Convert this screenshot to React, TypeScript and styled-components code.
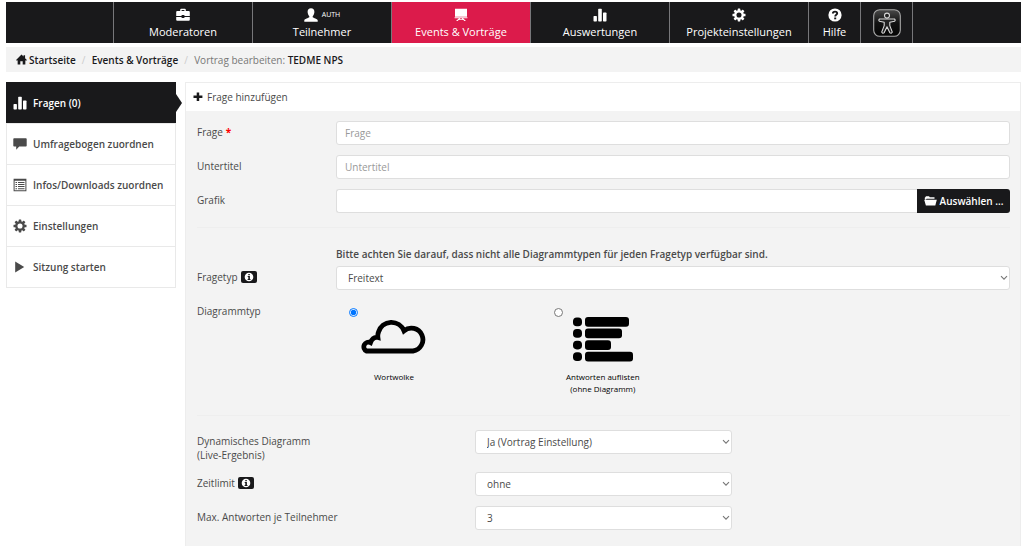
import React from "react";
import styled, { createGlobalStyle, css } from "styled-components";

const dark = "#19191b";
const pink = "#dc1b4b";
const grey = "#f3f3f3";
const line = "#e9e9e9";
const text = "#4a4a4a";

const GlobalStyle = createGlobalStyle`
  *, *::before, *::after { box-sizing: border-box; }
  body {
    margin: 0;
    background: #fff;
    color: ${text};
    font: 10px/14px "Open Sans", "Liberation Sans", sans-serif;
  }
  button, input, select { font: inherit; color: inherit; margin: 0; }
  a { color: inherit; text-decoration: none; }
`;

const Page = styled.div`
  display: flex;
  flex-direction: column;
  min-height: 100vh;
  padding: 2px 3px 0 6px;
`;

const Icon = styled.svg<{ $w?: number; $h?: number }>`
  display: block;
  flex: none;
  width: ${(p) => p.$w ?? 14}px;
  height: ${(p) => p.$h ?? 14}px;
  fill: currentColor;
`;

/* top navigation */
const Nav = styled.nav`
  display: flex;
  height: 41px;
  padding-left: 107px;
  background: ${dark};
`;

const NavLink = styled.a<{ $active?: boolean; $size?: number }>`
  display: flex;
  flex: 0 1 ${(p) => p.$size ?? 139}px;
  flex-direction: column;
  align-items: center;
  justify-content: center;
  gap: 1px;
  border-left: 1px solid #77777a;
  background: ${(p) => (p.$active ? pink : dark)};
  color: #fff;
  font-size: 11px;
  line-height: 18px;
  white-space: nowrap;
  &:last-child { border-right: 1px solid #77777a; }
`;

const NavIcon = styled.span`
  display: flex;
  align-items: center;
  gap: 4px;
  height: 14px;
  margin-top: 4px;
  font-size: 7px;
  line-height: 14px;
`;

/* breadcrumb */
const Breadcrumb = styled.nav`
  display: flex;
  align-items: center;
  height: 25px;
  margin-top: 4px;
  padding-left: 10px;
  background: ${grey};
  color: #777;
`;

const Crumb = styled.a`
  display: flex;
  align-items: center;
  gap: 2px;
  color: ${dark};
  font-weight: 600;
`;

const Slash = styled.span`
  width: 16px;
  color: #ccc;
  text-align: center;
`;

const Strong = styled.strong`
  color: ${dark};
  font-weight: 600;
`;

/* columns */
const Columns = styled.div`
  display: flex;
  flex: 1;
  gap: 9px;
  margin-top: 10px;
`;

const Sidebar = styled.nav`
  flex: 0 0 170px;
  align-self: flex-start;
  border: 1px solid ${line};
  border-top: 0;
`;

const SideLink = styled.a<{ $active?: boolean }>`
  position: relative;
  display: grid;
  grid-template-columns: 14px 1fr;
  align-items: center;
  gap: 6px;
  height: 41px;
  padding-left: 6px;
  color: ${text};
  font-weight: 600;
  & + & { border-top: 1px solid ${line}; }
  ${(p) =>
    p.$active &&
    css`
      margin: 0 -1px;
      padding-left: 7px;
      background: ${dark};
      color: #fff;
      &::after {
        content: "";
        position: absolute;
        left: 100%;
        top: 12px;
        border: 9px solid transparent;
        border-left: 6px solid ${dark};
        border-right: 0;
      }
    `}
`;

const Panel = styled.main`
  flex: 1;
  min-width: 0;
  border: 1px solid #ededed;
  border-bottom: 0;
  background: ${grey};
`;

const PanelTitle = styled.h1`
  display: flex;
  align-items: center;
  gap: 4px;
  height: 28px;
  margin: 0;
  padding-left: 7px;
  background: #fff;
  font-size: 10px;
  font-weight: 400;
`;

const Form = styled.form`
  padding: 10px 10px 16px 11px;
`;

const Row = styled.div<{ $wide?: boolean }>`
  display: grid;
  grid-template-columns: ${(p) => (p.$wide ? "278px minmax(0, 257px)" : "139px minmax(0, 1fr)")};
  align-items: start;
  & + & { margin-top: 10px; }
`;

const labelStyle = css`
  display: flex;
  align-items: center;
  gap: 3px;
  padding-top: 4px;
`;
const Label = styled.label`${labelStyle}`;
const GroupLabel = styled.span`${labelStyle}`;

const Required = styled.span`
  color: #f00;
  font-weight: 700;
`;

const InfoButton = styled.button`
  display: flex;
  align-items: center;
  justify-content: center;
  width: 16px;
  height: 12px;
  padding: 0;
  border: 0;
  border-radius: 2px;
  background: ${dark};
  color: #fff;
`;

const control = css`
  width: 100%;
  height: 24px;
  border: 1px solid #dedede;
  border-radius: 3px;
  background: #fff;
`;

const Input = styled.input`
  ${control}
  padding: 0 8px;
  &::placeholder { color: #999; opacity: 1; }
`;

const FileGroup = styled.div`
  display: flex;
  ${Input} {
    border-right: 0;
    border-radius: 3px 0 0 3px;
  }
`;

const FileButton = styled.button`
  display: flex;
  flex: 0 0 93px;
  align-items: center;
  justify-content: center;
  gap: 3px;
  height: 24px;
  padding: 0;
  border: 0;
  border-radius: 0 3px 3px 0;
  background: ${dark};
  color: #fff;
  font-weight: 600;
  white-space: nowrap;
`;

const SelectBox = styled.div`
  position: relative;
  svg {
    position: absolute;
    right: 2px;
    top: 9px;
    pointer-events: none;
  }
`;

const NativeSelect = styled.select`
  ${control}
  appearance: none;
  padding: 0 12px 0 11px;
`;

const Rule = styled.hr`
  height: 1px;
  margin: 14px 0;
  border: 0;
  background: #eeeeee;
`;

const Note = styled.p`
  margin: 0 0 5px 139px;
  padding-top: 5px;
  font-weight: 600;
`;

const Options = styled.div`
  display: grid;
  grid-template-columns: 205px 205px;
  height: 101px;
`;

const Option = styled.label`
  display: block;
  padding: 8px 0 0 13px;
`;

const Radio = styled.input`
  display: block;
  width: 9px;
  height: 9px;
`;

const Figure = styled.span`
  display: flex;
  flex-direction: column;
  align-items: center;
  width: fit-content;
  margin-left: 12px;
  color: #000;
  font-size: 8px;
  line-height: 12px;
  text-align: center;
  svg { margin-bottom: 9px; }
`;

const BarsIcon = () => (
  <Icon viewBox="0 0 14 14" aria-hidden="true">
    <rect x="0.5" y="8" width="3.4" height="5.5" rx="0.7" />
    <rect x="5.2" y="0.8" width="3.6" height="12.7" rx="0.7" />
    <rect x="10" y="4.5" width="3.5" height="9" rx="0.7" />
  </Icon>
);
const GearIcon = () => (
  <Icon viewBox="0 0 14 14" aria-hidden="true">
    {[0, 45, 90, 135, 180, 225, 270, 315].map((a) => (
      <rect key={a} x="5.7" y="0.5" width="2.6" height="2.6" rx="0.4" transform={`rotate(${a} 7 7)`} />
    ))}
    <circle cx="7" cy="7" r="3.700" fill="none" stroke="currentColor" strokeWidth="2.300" />
  </Icon>
);
const CaseIcon = () => (
  <Icon viewBox="0 0 14 14" aria-hidden="true">
    <path fillRule="evenodd" d="M4.2 3V1.7Q4.2.8 5.2.8h3.6q1 0 1 .9V3h2.9q1.100 0 1.100 1.100V8H8.400V7H5.600v1H.2V4.100Q.2 3 1.300 3ZM5.600 3h2.800v-.9H5.600Z" />
    <path d="M.2 8.900h5.400v1h2.800v-1h5.400v2.900q0 1-1 1H1.200q-1 0-1-1Z" />
  </Icon>
);
const UserIcon = () => (
  <Icon viewBox="0 0 14 14" aria-hidden="true">
    <path d="M7 .3c2.200 0 3.500 1.500 3.400 3.800C10.300 6 9.500 7.500 8.700 8.200v1c.8.8 4.800 1.500 5 3.100v1.400H.3v-1.400c.2-1.600 4.200-2.300 5-3.100v-1C4.500 7.500 3.700 6 3.600 4.100 3.500 1.800 4.800.3 7 .3Z" />
  </Icon>
);
const BoardIcon = () => (
  <Icon viewBox="0 0 14 14" aria-hidden="true">
    <path d="M1 .8h12v8H1ZM.6 9.300h12.800v1H.6ZM2 12.900l3-2.600h1.400l-1 1h3.200l-1-1H9l3 2.600h-1.700l-.9-.8H4.600l-.9.800Z" />
  </Icon>
);
const HelpIcon = () => (
  <Icon viewBox="0 0 14 14" aria-hidden="true">
    <circle cx="7" cy="7" r="6.600" />
    <path d="M4.900 5.400C4.900 3 9.200 3 9.200 5.300c0 1.600-2 1.400-2 3.200" fill="none" stroke={dark} strokeWidth="1.900" />
    <rect x="6.200" y="9.500" width="2" height="1.800" fill={dark} />
  </Icon>
);
const AccessIcon = () => (
  <Icon viewBox="0 0 28 28" $w={28} $h={28} aria-hidden="true">
    <defs>
      <linearGradient id="tile" x1="0" y1="0" x2="0" y2="1">
        <stop offset="0" stopColor="#4a4a4a" />
        <stop offset="0.5" stopColor="#111" />
        <stop offset="1" stopColor="#050505" />
      </linearGradient>
    </defs>
    <rect x="0.7" y="0.7" width="26.600" height="26.600" rx="6" fill="url(#tile)" stroke="#aaa" strokeWidth="1.100" />
    <g fill="#222" stroke="#d8d8d8" strokeWidth="1.100" strokeLinejoin="round">
      <circle cx="14" cy="6.600" r="2.500" />
      <path d="M6.500 10h15q1.300 1.300 0 2.300l-4.700.9v3.400l2.500 6.500q-.8 1.700-2.300.8L14 17.800l-3 6.100q-1.500.9-2.300-.8l2.500-6.500v-3.400l-4.700-.9q-1.300-1 0-2.300Z" />
    </g>
  </Icon>
);
const HomeIcon = () => (
  <Icon viewBox="0 0 12 12" $w={11} $h={11} aria-hidden="true">
    <path d="M6 .6 8.200 2.800V1.400h1.700v3.100l2 2-.8.900-.9-.7v4.700H7.300V8H4.700v3.400H1.800V6.700l-.9.7-.8-.9Z" />
  </Icon>
);
const ChatIcon = () => (
  <Icon viewBox="0 0 14 14" aria-hidden="true">
    <path d="M1.100 1.200h11.800q.8 0 .8.800v6.700q0 .8-.8.800H6.200L3.200 12.800V9.500H1.100q-.8 0-.8-.8V2q0-.8.8-.8Z" />
  </Icon>
);
const ListIcon = () => (
  <Icon viewBox="0 0 14 14" aria-hidden="true">
    <path fillRule="evenodd" d="M.6.800h12.800v12.400H.6ZM1.600 2.800v9.400h10.800V2.800Z" />
    <path d="M2.500 3.900h1.500v1H2.500Zm2.500 0h6.500v1H5ZM2.500 6h1.500v1H2.500ZM5 6h6.500v1H5ZM2.500 8.100h1.500v1H2.500Zm2.500 0h6.500v1H5ZM2.500 10.200h1.500v1H2.500Zm2.500 0h6.500v1H5Z" />
  </Icon>
);
const PlayIcon = () => (
  <Icon viewBox="0 0 14 14" aria-hidden="true">
    <path d="M2.200 1.500 11.200 7l-9 5.500Z" />
  </Icon>
);
const PlusIcon = () => (
  <Icon viewBox="0 0 10 10" $w={10} $h={10} aria-hidden="true">
    <path d="M3.700.400h2.500v3.100h3.200V5.900H6.200V9H3.700V5.900H.500V3.500h3.200Z" fill={dark} />
  </Icon>
);
const FolderIcon = () => (
  <Icon viewBox="0 0 13 12" $w={13} $h={12} aria-hidden="true">
    <path d="M1.300 2.200 2 1.200h3l.8 1h4.700v1.600H2.600L1.700 5 .8 4V2.800Z" />
    <path d="M.2 4.700h12.600l-1.500 5.900H1.900Z" />
  </Icon>
);
const InfoIcon = () => (
  <Icon viewBox="0 0 10 10" $w={10} $h={10} aria-hidden="true">
    <circle cx="5" cy="5" r="4.300" />
    <path d="M4.300 1.900h1.500v1.300H4.300ZM3.700 4h2.200v2.900h.6v1H3.600v-1h.7V5h-.6Z" fill={dark} />
  </Icon>
);
const Chevron = () => (
  <Icon viewBox="0 0 8 6" $w={8} $h={6} aria-hidden="true">
    <path d="M1 1.200 4 4.200l3-3" fill="none" stroke="#777" strokeWidth="1.100" />
  </Icon>
);
const CloudPicture = () => (
  <Icon viewBox="0 0 66 45" $w={66} $h={45} aria-hidden="true">
    <path
      d="M5.500 34H52a11.500 11.500 0 1 0-9-20.200A13.500 13.500 0 0 0 17.500 15q-1 2.500-.6 5.500-5-1.200-7.400 5.100a4.400 4.400 0 0 0-4 8.400Z"
      fill="none"
      stroke="#000"
      strokeWidth="4.800"
    />
  </Icon>
);
const ListPicture = () => (
  <Icon viewBox="0 0 60 45" $w={60} $h={45} aria-hidden="true">
    {[56, 49, 38, 60].map((end, i) => (
      <React.Fragment key={end}>
        <rect x="0" y={i * 11.600 + 0.500} width="9" height="8.700" rx="3.800" />
        <rect x="12" y={i * 11.600} width={end - 12} height="9.700" rx="3" />
      </React.Fragment>
    ))}
  </Icon>
);

const navItems = [
  { label: "Moderatoren", icon: <CaseIcon /> },
  { label: "Teilnehmer", icon: <><UserIcon />AUTH</> },
  { label: "Events & Vorträge", icon: <BoardIcon />, active: true },
  { label: "Auswertungen", icon: <BarsIcon /> },
  { label: "Projekteinstellungen", icon: <GearIcon /> },
  { label: "Hilfe", icon: <HelpIcon />, size: 52 },
];

const sideItems = [
  { label: "Fragen (0)", icon: <BarsIcon /> },
  { label: "Umfragebogen zuordnen", icon: <ChatIcon /> },
  { label: "Infos/Downloads zuordnen", icon: <ListIcon /> },
  { label: "Einstellungen", icon: <GearIcon /> },
  { label: "Sitzung starten", icon: <PlayIcon /> },
];

const Select = ({ id, value }: { id: string; value: string }) => (
  <SelectBox>
    <NativeSelect id={id} defaultValue={value}>
      <option>{value}</option>
    </NativeSelect>
    <Chevron />
  </SelectBox>
);

const Info = () => (
  <InfoButton type="button" aria-label="Info">
    <InfoIcon />
  </InfoButton>
);

export default function App() {
  return (
    <Page>
      <GlobalStyle />
      <Nav>
        {navItems.map((n) => (
          <NavLink key={n.label} href="#" $active={n.active} $size={n.size}>
            <NavIcon>{n.icon}</NavIcon>
            {n.label}
          </NavLink>
        ))}
        <NavLink href="#" $size={53} aria-label="Barrierefreiheit">
          <AccessIcon />
        </NavLink>
      </Nav>

      <Breadcrumb>
        <Crumb href="#"><HomeIcon />Startseite</Crumb>
        <Slash>/</Slash>
        <Crumb href="#">Events &amp; Vorträge</Crumb>
        <Slash>/</Slash>
        <span>Vortrag bearbeiten: <Strong>TEDME NPS</Strong></span>
      </Breadcrumb>

      <Columns>
        <Sidebar>
          {sideItems.map((s, i) => (
            <SideLink key={s.label} href="#" $active={i === 0}>
              {s.icon}
              {s.label}
            </SideLink>
          ))}
        </Sidebar>

        <Panel>
          <PanelTitle><PlusIcon />Frage hinzufügen</PanelTitle>
          <Form>
            <Row>
              <Label htmlFor="frage">Frage <Required>*</Required></Label>
              <Input id="frage" placeholder="Frage" />
            </Row>
            <Row>
              <Label htmlFor="untertitel">Untertitel</Label>
              <Input id="untertitel" placeholder="Untertitel" />
            </Row>
            <Row>
              <Label htmlFor="grafik">Grafik</Label>
              <FileGroup>
                <Input id="grafik" />
                <FileButton type="button"><FolderIcon />Auswählen ...</FileButton>
              </FileGroup>
            </Row>
            <Rule />
            <Note>Bitte achten Sie darauf, dass nicht alle Diagrammtypen für jeden Fragetyp verfügbar sind.</Note>
            <Row>
              <GroupLabel><label htmlFor="fragetyp">Fragetyp</label><Info /></GroupLabel>
              <Select id="fragetyp" value="Freitext" />
            </Row>
            <Row role="radiogroup" aria-labelledby="diagrammtyp">
              <GroupLabel id="diagrammtyp">Diagrammtyp</GroupLabel>
              <Options>
                <Option>
                  <Radio type="radio" name="diagramm" defaultChecked />
                  <Figure><CloudPicture />Wortwolke</Figure>
                </Option>
                <Option>
                  <Radio type="radio" name="diagramm" />
                  <Figure><ListPicture /><span>Antworten auflisten<br />(ohne Diagramm)</span></Figure>
                </Option>
              </Options>
            </Row>
            <Rule />
            <Row $wide>
              <Label htmlFor="dynamisch">Dynamisches Diagramm<br />(Live-Ergebnis)</Label>
              <Select id="dynamisch" value="Ja (Vortrag Einstellung)" />
            </Row>
            <Row $wide>
              <GroupLabel><label htmlFor="zeitlimit">Zeitlimit</label><Info /></GroupLabel>
              <Select id="zeitlimit" value="ohne" />
            </Row>
            <Row $wide>
              <Label htmlFor="max">Max. Antworten je Teilnehmer</Label>
              <Select id="max" value="3" />
            </Row>
          </Form>
        </Panel>
      </Columns>
    </Page>
  );
}
